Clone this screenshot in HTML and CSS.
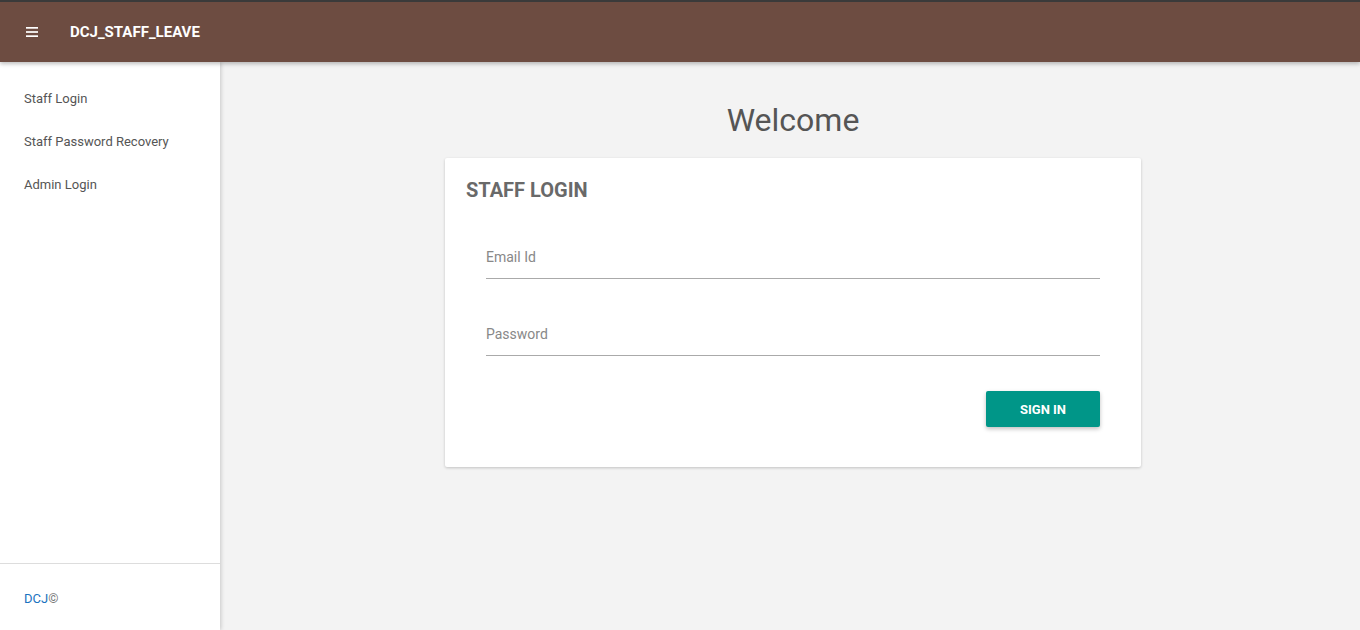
FILE: index.html
```html
<!DOCTYPE html>
<html>
<head>
<meta charset="utf-8">
<link rel="stylesheet" href="styles.css">
</head>
<body>
<header class="topbar">
  <button class="menu-btn" aria-label="menu">
    <svg width="12" height="10" viewBox="0 0 12 10"><rect x="0" y="0" width="12" height="1.7" fill="#fff"/><rect x="0" y="4.15" width="12" height="1.7" fill="#fff"/><rect x="0" y="8.3" width="12" height="1.7" fill="#fff"/></svg>
  </button>
  <span class="brand">DCJ_STAFF_LEAVE</span>
</header>
<div class="layout">
  <aside class="sidebar">
    <nav class="nav">
      <a class="nav-item">Staff Login</a>
      <a class="nav-item">Staff Password Recovery</a>
      <a class="nav-item">Admin Login</a>
    </nav>
    <div class="sidebar-footer"><span class="dcj">DCJ</span>©</div>
  </aside>
  <main class="main">
    <h1 class="welcome">Welcome</h1>
    <section class="card">
      <h2 class="card-title">STAFF LOGIN</h2>
      <form class="form">
        <label class="field"><span class="field-label">Email Id</span></label>
        <label class="field"><span class="field-label">Password</span></label>
        <div class="actions"><button type="button" class="signin">SIGN IN</button></div>
      </form>
    </section>
  </main>
</div>
</body>
</html>
```
FILE: styles.css
```css
* { box-sizing: border-box; }
html, body { margin: 0; padding: 0; height: 100%; }
body {
  font-family: Roboto, "Liberation Sans", sans-serif;
  background: #f3f3f3;
  overflow: hidden;
}
.topbar {
  height: 62px;
  background: #6d4c41;
  border-top: 2px solid #3a3a3a;
  display: flex;
  align-items: center;
  padding-left: 26px;
  position: relative;
  z-index: 2;
  box-shadow: 0 2px 4px rgba(0,0,0,0.25);
}
.menu-btn {
  background: none; border: 0; padding: 0; margin: 0;
  width: 12px; height: 10px; display: flex;
}
.brand {
  color: #fff;
  font-weight: 700;
  font-size: 15px;
  margin-left: 32px;
}
.layout {
  display: flex;
  height: calc(100% - 62px);
}
.sidebar {
  width: 220px;
  background: #fff;
  display: flex;
  flex-direction: column;
  box-shadow: 1px 0 4px rgba(0,0,0,0.18);
  position: relative;
  z-index: 1;
}
.nav {
  flex: 1;
  display: flex;
  flex-direction: column;
  padding-top: 15px;
}
.nav-item {
  font-size: 13px;
  color: #555;
  padding: 0 24px;
  height: 43px;
  line-height: 43px;
}
.sidebar-footer {
  border-top: 1px solid #ddd;
  height: 67px;
  padding: 27px 24px 0;
  font-size: 13px;
  color: #777;
}
.dcj { color: #1a73c0; }
.main {
  flex: 1;
  display: flex;
  flex-direction: column;
  align-items: center;
  padding-top: 36px;
  padding-left: 6px;
}
.welcome {
  margin: 0;
  font-weight: 400;
  font-size: 32px;
  line-height: 44px;
  color: #555;
}
.card {
  margin-top: 16px;
  width: 696px;
  height: 309px;
  background: #fff;
  border-radius: 2px;
  box-shadow: 0 1px 3px rgba(0,0,0,0.2);
  padding: 20px 21px;
}
.card-title {
  margin: 0;
  font-size: 20px;
  font-weight: 700;
  color: #696969;
  line-height: 24px;
}
.form {
  padding: 0 20px;
  margin-top: 44px;
  display: flex;
  flex-direction: column;
  gap: 44px;
}
.field {
  display: block;
  height: 33px;
  border-bottom: 1px solid #aaa;
}
.field-label {
  font-size: 14px;
  color: #888;
  line-height: 22px;
}
.actions {
  display: flex;
  justify-content: flex-end;
  margin-top: -9px;
}
.signin {
  width: 114px;
  height: 36px;
  background: #009688;
  color: #fff;
  border: 0;
  border-radius: 2px;
  font-family: Roboto, "Liberation Sans", sans-serif;
  font-weight: 700;
  font-size: 13px;
  box-shadow: 0 2px 4px rgba(0,0,0,0.25);
}
```
